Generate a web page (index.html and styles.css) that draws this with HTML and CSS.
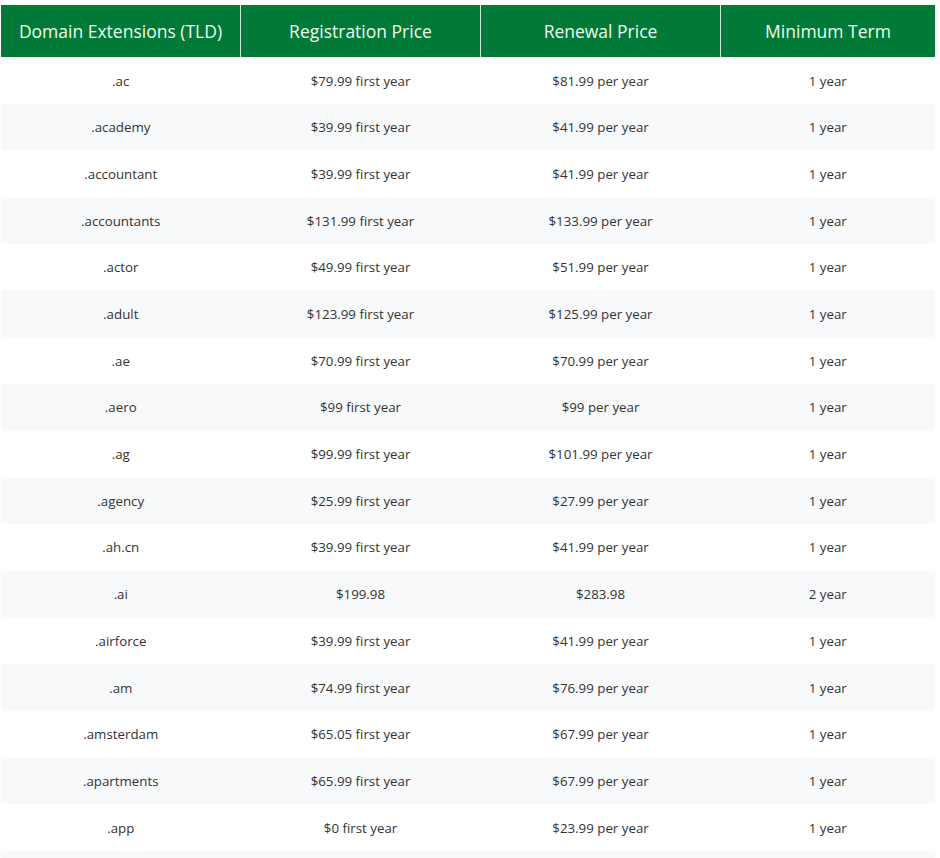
FILE: index.html
```html
<!DOCTYPE html>
<html>
<head>
<meta charset="utf-8">
<link rel="stylesheet" href="styles.css">
</head>
<body>
<div class="wrap">
<table class="tld">
<thead>
<tr><th class="c1">Domain Extensions (TLD)</th><th class="c2">Registration Price</th><th class="c3">Renewal Price</th><th class="c4">Minimum Term</th></tr>
</thead>
<tbody>
<tr><td>.ac</td><td>$79.99 first year</td><td>$81.99 per year</td><td>1 year</td></tr>
<tr><td>.academy</td><td>$39.99 first year</td><td>$41.99 per year</td><td>1 year</td></tr>
<tr><td>.accountant</td><td>$39.99 first year</td><td>$41.99 per year</td><td>1 year</td></tr>
<tr><td>.accountants</td><td>$131.99 first year</td><td>$133.99 per year</td><td>1 year</td></tr>
<tr><td>.actor</td><td>$49.99 first year</td><td>$51.99 per year</td><td>1 year</td></tr>
<tr><td>.adult</td><td>$123.99 first year</td><td>$125.99 per year</td><td>1 year</td></tr>
<tr><td>.ae</td><td>$70.99 first year</td><td>$70.99 per year</td><td>1 year</td></tr>
<tr><td>.aero</td><td>$99 first year</td><td>$99 per year</td><td>1 year</td></tr>
<tr><td>.ag</td><td>$99.99 first year</td><td>$101.99 per year</td><td>1 year</td></tr>
<tr><td>.agency</td><td>$25.99 first year</td><td>$27.99 per year</td><td>1 year</td></tr>
<tr><td>.ah.cn</td><td>$39.99 first year</td><td>$41.99 per year</td><td>1 year</td></tr>
<tr><td>.ai</td><td>$199.98</td><td>$283.98</td><td>2 year</td></tr>
<tr><td>.airforce</td><td>$39.99 first year</td><td>$41.99 per year</td><td>1 year</td></tr>
<tr><td>.am</td><td>$74.99 first year</td><td>$76.99 per year</td><td>1 year</td></tr>
<tr><td>.amsterdam</td><td>$65.05 first year</td><td>$67.99 per year</td><td>1 year</td></tr>
<tr><td>.apartments</td><td>$65.99 first year</td><td>$67.99 per year</td><td>1 year</td></tr>
<tr><td>.app</td><td>$0 first year</td><td>$23.99 per year</td><td>1 year</td></tr>
<tr class="tail"><td></td><td></td><td></td><td></td></tr>
</tbody>
</table>
</div>
</body>
</html>
```
FILE: styles.css
```css
html, body {
  margin: 0;
  padding: 0;
  background: #ffffff;
}
.wrap {
  padding: 5px 5px 0 1px;
}
.tld {
  width: 934px;
  border-collapse: collapse;
  table-layout: fixed;
  font-family: "Open Sans", sans-serif;
}
.tld th {
  background: #007a36;
  color: #eefaf2;
  font-weight: 400;
  font-size: 17.5px;
  height: 52px;
  padding: 0;
  text-align: center;
  border-left: 1px solid #c5ecd5;
}
.tld th.c1 { width: 239px; border-left: none; }
.tld th.c2 { width: 239px; }
.tld th.c3 { width: 239px; }
.tld td {
  font-size: 13.3px;
  color: #333333;
  text-align: center;
  padding: 1.5px 0 0 0;
  height: 45.2px;
  line-height: 17px;
}
.tld tbody tr:nth-child(even) td {
  background: #f8f9fb;
}
```
